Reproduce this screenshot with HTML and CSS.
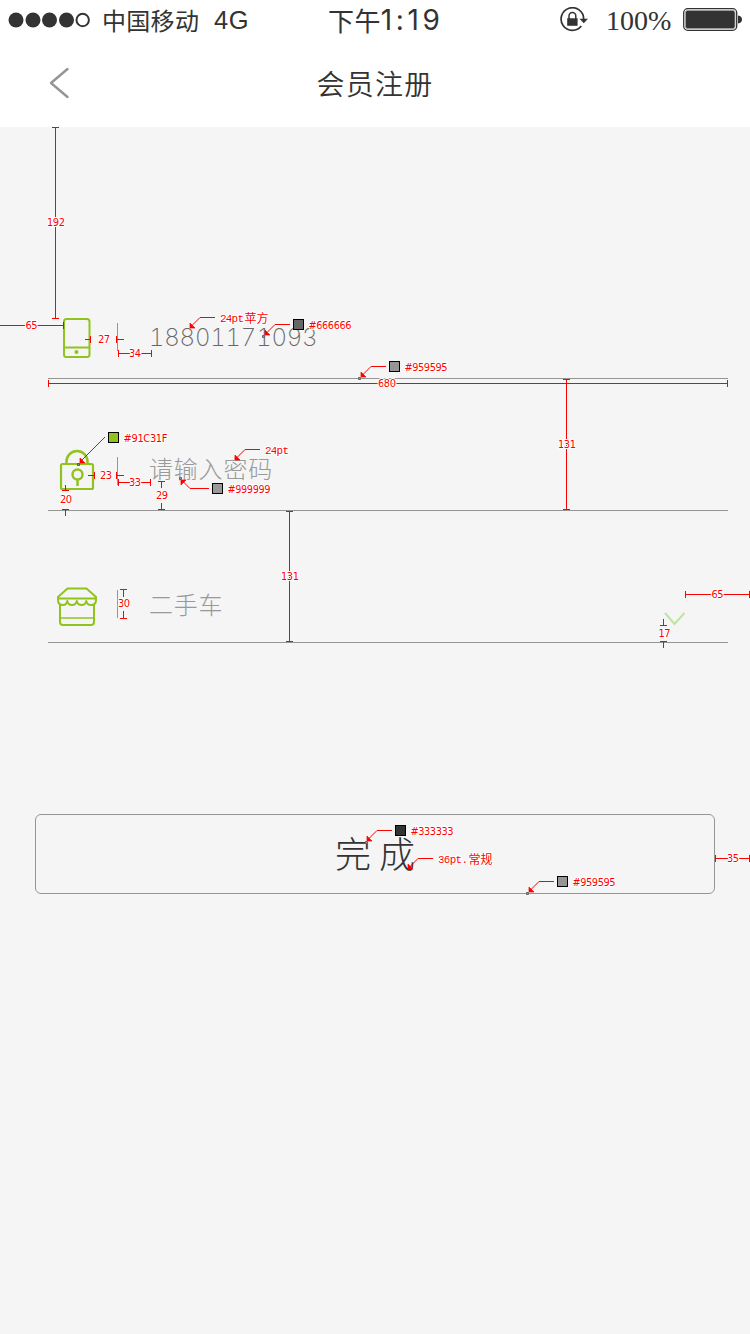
FILE: index.html
```html
<!DOCTYPE html>
<html lang="zh-CN">
<head>
<meta charset="utf-8">
<title>会员注册</title>
<link rel="stylesheet" href="styles.css">
</head>
<body>
<main class="screen">
  <header class="top">
    <div class="status">
      <svg class="signal" width="82" height="16" viewBox="0 0 82 16" fill="#333"><circle cx="8" cy="8" r="7.5"/><circle cx="25" cy="8" r="7.5"/><circle cx="41.500" cy="8" r="7.500"/><circle cx="58.500" cy="8" r="7.500"/><circle cx="74.700" cy="8" r="6.200" fill="none" stroke="#333" stroke-width="2"/></svg>
      <span class="carrier">中国移动</span>
      <span class="network">4G</span>
      <span class="clock"><span>下午</span><span class="digits">1:19</span></span>
      <svg class="rotation" width="30" height="26" viewBox="0 0 30 26" fill="none" stroke="#333"><path d="M23.700 12A11.300 11.300 0 1 0 21.300 19" stroke-width="1.700"/><path d="M19.500 11.700h8.500l-4.200 4.600z" fill="#333" stroke="none"/><rect x="7.200" y="11.300" width="10.400" height="7.500" fill="#333" stroke="none"/><path d="M9 12V9a3.400 3.400 0 0 1 6.800 0v3" stroke-width="1.500"/></svg>
      <span class="percent">100%</span>
      <svg class="battery" width="60" height="24" viewBox="0 0 60 24"><rect x=".7" y=".7" width="53" height="21.600" rx="4" fill="#fff" stroke="#333" stroke-width="1.300"/><rect x="2.300" y="2.300" width="49.800" height="18.400" rx="2.500" fill="#333" stroke="#bbb" stroke-width=".8"/><path d="M55 7.500q4 .5 4 4t-4 4z" fill="#333"/></svg>
    </div>
    <div class="nav">
      <svg class="back" width="22" height="32" viewBox="0 0 22 32" fill="none" stroke="#959595" stroke-width="2.400" stroke-linecap="round" stroke-linejoin="round"><path d="M18.500 2L2 16l16.500 14"/></svg>
      <h1 class="title">会员注册</h1>
    </div>
  </header>

  <section class="form">
    <div class="row">
      <svg class="icon" width="44" height="44" viewBox="0 0 44 44" fill="none" stroke="#91c31f" stroke-width="2"><rect x="9" y="3" width="25.500" height="38" rx="2.500"/><path d="M9 31.500h26" /><circle cx="21.500" cy="36" r="2" fill="#91c31f" stroke="none"/></svg>
      <i class="divider divider-first"></i>
      <span class="value phone">18801171093</span>
    </div>
    <div class="row">
      <svg class="icon" width="44" height="44" viewBox="0 0 44 44" fill="none" stroke="#91c31f" stroke-width="2"><rect x="6" y="16" width="32" height="25" rx="1.500" stroke-width="2.200"/><path d="M11.500 16v-2.500a10.500 10.500 0 0 1 21 0V16M22.500 31.500V38" stroke-width="2.500"/><circle cx="22.500" cy="26.500" r="5" stroke-width="2.400"/></svg>
      <i class="divider divider-second"></i>
      <span class="value hint">请输入密码</span>
    </div>
    <div class="row">
      <svg class="icon icon-shop" width="44" height="44" viewBox="0 0 44 44" fill="none" stroke="#91c31f" stroke-width="2" stroke-linejoin="round"><path d="M3 13L12.500 4.500h19L41 13v3q0 5-5 5-4 0-4.700-4-.7 4-4.700 4t-4.800-4q-.8 4-4.800 4t-4.700-4Q11.600 21 8 21q-5 0-5-5zM3 14.500h38M5 20v18q0 3 3 3h28q3 0 3-3V20"/><path d="M5 34h34" stroke-width="1.600"/></svg>
      <i class="divider divider-third"></i>
      <span class="value category">二手车</span>
      <svg class="chevron" width="22" height="14" viewBox="0 0 22 14" fill="none" stroke="#bfe3a3" stroke-width="2"><path d="M1 1l9.500 11L20.500 1"/></svg>
    </div>
  </section>

  <button class="submit" type="button">完 成</button>

  <svg class="notes" width="750" height="1334" viewBox="0 0 750 1334">
    <g class="rule">
      <path d="M52 127.500h7M55.500 127v191M52 318.500h7"/>
      <path d="M0 325.500h63M63.500 322v7"/>
      <path d="M85 339.500h6M90.500 336v7M116.500 336v7M117 339.500h7"/>
      <path d="M118 353.500h34M118.500 350v7M151.500 350v7"/>
      <path d="M48 383.500h680M48.500 380v7M727.500 380v7"/>
      <path d="M563 379.500h7M566.500 379v131M563 509.500h7"/>
      <path d="M286 511.500h7M289.500 511v131M286 641.500h7"/>
      <path d="M62 490.500h7M65.500 485v6M62 509.500h7M65.500 509v7"/>
      <path d="M88 475.500h6M94.500 472v7M116.500 472v7M117 475.500h7"/>
      <path d="M118 482.500h33M118.500 479v7M150.500 479v7"/>
      <path d="M158 481.500h7M161.500 481v7M158 509.500h7M161.500 503v7"/>
      <path d="M120 589.500h7M123.500 589v8M120 618.500h7M123.500 611v8"/>
      <path d="M660 625.500h7M663.500 619v7M660 641.500h7M663.500 641v7"/>
      <path d="M685 594.500h65M685.500 591v7M749.500 591v7"/>
      <path d="M715 858.500h35M715.500 855v7M749.500 855v7"/>
    </g>
    <g class="leader">
      <path d="M215 317.500h-15L192 325.500"/><path d="M290 324.500h-15L267 332.500"/><path d="M386 366.500h-15L362 375.500"/>
      <path d="M105 437L81 461"/><path d="M260 449.500h-15L237 457.500"/><path d="M209 488.500h-19L183 481.500"/>
      <path d="M392 830.500h-15L369 838.500"/><path d="M433 858.500h-15L410 866.500"/><path d="M554 881.500h-15L530 890.500"/>
    </g>
    <g class="tip">
      <path d="M190 323v5h5zM265 330v5h5zM361 372v5h5zM80 458v5h5zM235 455v5h5zM181 485v-5h5zM367 836v5h5zM408 864v5h5zM529 887v5h5z"/>
    </g>
    <g class="anchor">
      <path d="M262.500 335.500h2v2h-2zM358.500 377.500h2v2h-2zM179.500 477.500h2v2h-2zM365.500 841.500h2v2h-2zM526.500 892.500h2v2h-2z"/>
      <path class="anchor-blue" d="M77.500 463.500h2v2h-2z"/>
    </g>
    <g class="swatch">
      <rect x="293.500" y="319.500" width="10" height="10" fill="#666"/><rect x="389.500" y="361.500" width="10" height="10" fill="#959595"/>
      <rect x="108.500" y="432.500" width="10" height="10" fill="#91c31f"/><rect x="212.500" y="483.500" width="10" height="10" fill="#999"/>
      <rect x="395.500" y="825.500" width="10" height="10" fill="#333"/><rect x="557.500" y="876.500" width="10" height="10" fill="#959595"/>
    </g>
    <g class="label">
      <text x="47" y="226" textLength="18">192</text><text x="25.500" y="329" textLength="12">65</text><text x="98" y="343" textLength="12">27</text>
      <text x="129" y="357" textLength="12">34</text><text x="378" y="387" textLength="18">680</text><text x="558" y="448" textLength="18">131</text>
      <text x="281" y="580" textLength="18">131</text><text x="60" y="503" textLength="12">20</text><text x="100" y="479" textLength="12">23</text>
      <text x="129" y="486" textLength="12">33</text><text x="156" y="499" textLength="12">29</text><text x="118" y="607" textLength="12">30</text>
      <text x="658.500" y="637" textLength="12">17</text><text x="711.500" y="598" textLength="12">65</text><text x="727" y="862" textLength="12">35</text>
      <text x="308.500" y="329" textLength="43">#666666</text><text x="404.500" y="371" textLength="43">#959595</text><text x="123.500" y="442" textLength="44">#91C31F</text>
      <text x="227.500" y="493" textLength="43">#999999</text><text x="410.500" y="835" textLength="43">#333333</text><text x="572.500" y="886" textLength="43">#959595</text>
    </g>
    <g class="label-mono">
      <text x="220" y="322" textLength="24">24pt</text><text class="han" x="244.500" y="323">苹方</text><text x="265" y="454" textLength="24">24pt</text><text x="438" y="863" textLength="30">36pt.</text><text class="han" x="468.500" y="864">常规</text>
    </g>
  </svg>
</main>
</body>
</html>
```

FILE: styles.css
```css
* { box-sizing: border-box; }
body { margin: 0; background: #f5f5f5; color: #333; font-family: "Noto Sans CJK SC", sans-serif; }
.screen { position: relative; width: 750px; height: 1334px; overflow: hidden; }
.top { height: 127px; background: #fff; }
.status { height: 40px; display: flex; align-items: center; white-space: nowrap; }
.signal { margin-left: 8px; flex: none; }
.carrier { width: 98px; margin-left: 12px; font-size: 24px; line-height: 38px; letter-spacing: .3px; }
.network { width: 50px; margin-left: 14px; font-family: "Liberation Sans", sans-serif; font-size: 25.5px; line-height: 39px; letter-spacing: .6px; }
.clock { width: 114px; margin-left: 64px; display: flex; align-items: center; font-size: 26px; line-height: 38px; letter-spacing: .4px; }
.digits { font-family: Inter, "Liberation Sans", sans-serif; font-size: 28px; letter-spacing: 3.6px; line-height: 40px; }
.rotation { margin-left: 118px; flex: none; }
.percent { width: 66px; margin-left: 16px; padding-top: 2px; font-family: "Liberation Serif", serif; font-size: 28px; line-height: 36px; }
.battery { margin-left: 11px; flex: none; }
.nav { height: 85px; display: grid; grid-template-columns: 100px 1fr 100px; align-items: center; }
.back { margin-left: 49px; }
.title { margin: 0; text-align: center; font-size: 28px; font-weight: 350; line-height: 40px; letter-spacing: 1.2px; }
.form { margin: 120px 22px 0 48px; }
.row { height: 132px; display: flex; align-items: flex-end; border-bottom: 1px solid #959595; }
.icon { margin-left: 7px; margin-bottom: 18px; flex: none; }
.icon-shop { margin-bottom: 14px; }
.divider { width: 1px; height: 28px; margin-left: 18px; background: #959595; }
.divider-first { margin-bottom: 27px; }
.divider-second { margin-bottom: 25px; }
.divider-third { margin-bottom: 24px; }
.value { margin-left: 31px; font-size: 24px; font-weight: 300; line-height: 36px; color: #999; }
.phone { margin-bottom: 22px; font-family: Inter, "Liberation Sans", sans-serif; font-weight: 250; font-variant-numeric: tabular-nums; color: #666; letter-spacing: -.2px; }
.hint { margin-bottom: 24px; letter-spacing: .8px; }
.category { margin-bottom: 20px; letter-spacing: .8px; }
.chevron { margin: 0 42.5px 16px auto; }
.submit { display: block; width: 680px; height: 80px; margin: 171px 35px 0; padding: 0 0 4px; border: 1px solid #959595; border-radius: 6px; background: transparent; color: #333; font-family: "Noto Sans CJK SC", sans-serif; font-size: 36px; font-weight: 300; line-height: 74px; }
.notes { position: absolute; left: 0; top: 0; }
.rule { fill: none; stroke: #f00; stroke-width: 1; shape-rendering: crispEdges; }
.leader { fill: none; stroke: #f00; stroke-width: 1; }
.tip { fill: #f00; stroke: #f00; stroke-width: .7; }
.anchor { fill: #999; stroke: #666; }
.anchor-blue { stroke: #5b3fc4; }
.swatch { stroke: #000; stroke-width: 1; }
.label, .label-mono { fill: #f00; stroke: #fff; stroke-width: 2px; paint-order: stroke; stroke-linejoin: round; }
.label { font: 11px "DejaVu Sans Condensed", "DejaVu Sans", sans-serif; }
.label-mono { font: 11px "Liberation Mono", monospace; }
.han { font: 12px "Noto Sans CJK SC", sans-serif; }
```
